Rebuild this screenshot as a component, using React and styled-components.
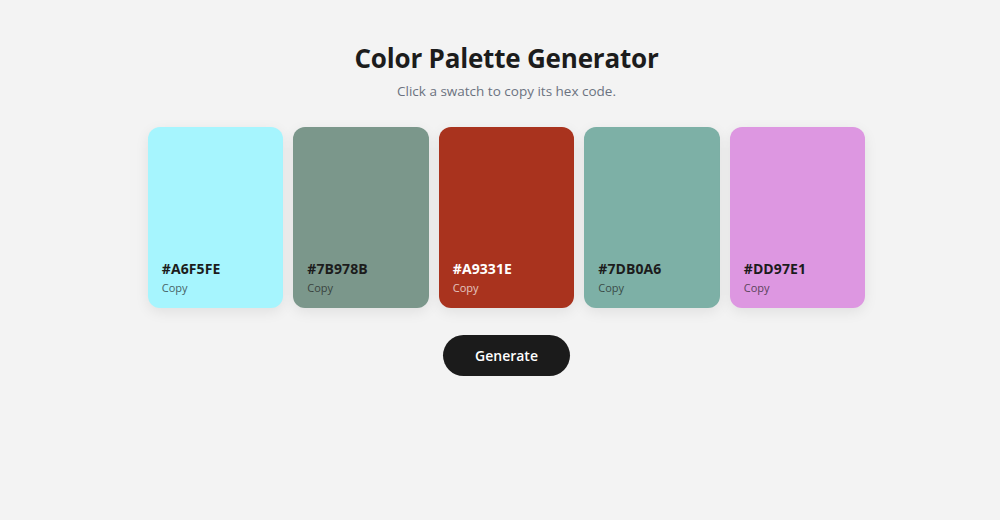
import React, { useState } from 'react'
import styled, { createGlobalStyle } from 'styled-components'

const GlobalStyle = createGlobalStyle`
  html, body {
    margin: 0;
    background: #f3f3f3;
    font-family: "Open Sans", "Noto Sans", sans-serif;
    color: #1b1b1b;
  }
`

const Page = styled.main`
  display: flex;
  flex-direction: column;
  align-items: center;
  padding: 41px 0 0 13px;
`

const Title = styled.h1`
  margin: 0;
  font-size: 26px;
  font-weight: 700;
  line-height: 34px;
  letter-spacing: -0.2px;
  color: #1c1c1c;
`

const Subtitle = styled.p`
  margin: 6px 0 0;
  font-size: 13.5px;
  line-height: 20px;
  color: #6b7280;
`

const Swatches = styled.div`
  display: grid;
  grid-template-columns: repeat(5, 135.5px);
  gap: 10px;
  margin-top: 26px;
`

const Swatch = styled.button`
  display: flex;
  flex-direction: column;
  justify-content: flex-end;
  align-items: flex-start;
  height: 181px;
  padding: 0 14px 12px;
  border: none;
  border-radius: 12px;
  background: ${p => p.color};
  color: ${p => (p.dark ? '#ffffff' : '#1c1c1c')};
  box-shadow: 0 4px 14px rgba(0, 0, 0, 0.08);
  font-family: inherit;
  text-align: left;
  cursor: pointer;
`

const Hex = styled.span`
  font-size: 14px;
  font-weight: 700;
  letter-spacing: 0.1px;
  line-height: 20px;
`

const CopyLabel = styled.span`
  margin-top: 1px;
  font-size: 11px;
  line-height: 16px;
  opacity: 0.7;
`

const GenerateButton = styled.button`
  margin-top: 27px;
  width: 127px;
  height: 41px;
  border: none;
  border-radius: 21px;
  background: #1b1b1b;
  color: #ffffff;
  font-family: inherit;
  font-size: 14px;
  font-weight: 600;
  cursor: pointer;
`

const initial = ['#A6F5FE', '#7B978B', '#A9331E', '#7DB0A6', '#DD97E1']

const randomHex = () =>
  '#' + Math.floor(Math.random() * 0xffffff).toString(16).padStart(6, '0').toUpperCase()

const isDark = hex => {
  const n = parseInt(hex.slice(1), 16)
  const r = (n >> 16) & 255
  const g = (n >> 8) & 255
  const b = n & 255
  return 0.299 * r + 0.587 * g + 0.114 * b < 110
}

export default function App() {
  const [colors, setColors] = useState(initial)
  const [copied, setCopied] = useState(null)

  const copy = hex => {
    navigator.clipboard && navigator.clipboard.writeText(hex).catch(() => {})
    setCopied(hex)
  }

  return (
    <>
      <GlobalStyle />
      <Page>
        <Title>Color Palette Generator</Title>
        <Subtitle>Click a swatch to copy its hex code.</Subtitle>
        <Swatches>
          {colors.map((hex, i) => (
            <Swatch key={i} color={hex} dark={isDark(hex)} onClick={() => copy(hex)}>
              <Hex>{hex}</Hex>
              <CopyLabel>{copied === hex ? 'Copied!' : 'Copy'}</CopyLabel>
            </Swatch>
          ))}
        </Swatches>
        <GenerateButton onClick={() => setColors(colors.map(randomHex))}>Generate</GenerateButton>
      </Page>
    </>
  )
}
